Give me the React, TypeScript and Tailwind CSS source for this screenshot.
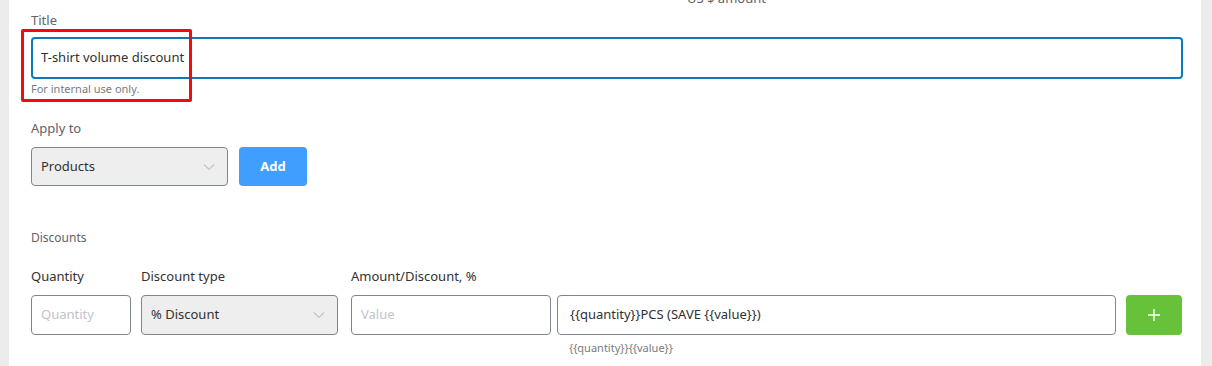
import React from 'react';

const Chevron = () => (
  <svg width="12" height="8" viewBox="0 0 12 8" fill="none" className="shrink-0">
    <path d="M1 1.5 L6 6.5 L11 1.5" stroke="#c0c4cc" strokeWidth="1.2" />
  </svg>
);

const App = () => {
  return (
    <div
      className="flex w-[1212px] h-[366px] bg-[#ececec] overflow-hidden"
      style={{ fontFamily: '"Noto Sans", "Open Sans", sans-serif' }}
    >
      <div className="relative ml-[9px] w-[1192px] bg-white pl-[22px] pr-[18px] flex flex-col">
        {/* cut-off heading from the block above */}
        <div className="-mt-[10px] pl-[656px] text-[13px] leading-[16px] text-[#606266]">US $ amount</div>

        {/* Title */}
        <div className="mt-[6px] text-[13px] leading-[16px] text-[#606266]">Title</div>
        <div className="mt-[9px] h-[42px] border-2 border-[#0a7bb8] rounded-[4px] flex items-center pl-[8px] text-[13px] text-[#303133]">
          T-shirt volume discount
        </div>
        <div className="mt-[3px] text-[11px] leading-[14px] text-[#777b80]">For internal use only.</div>

        {/* highlight box */}
        <div className="absolute left-[12px] top-[29px] w-[171px] h-[73px] border-[3px] border-[#f5080f] rounded-[2px] pointer-events-none" />

        {/* Apply to */}
        <div className="mt-[24px] text-[13px] leading-[16px] text-[#606266]">Apply to</div>
        <div className="mt-[11px] flex gap-[11px]">
          <div className="w-[197px] h-[39px] bg-[#eeeeee] border border-[#7f858d] rounded-[4px] flex items-center justify-between pl-[9px] pr-[12px] text-[13px] text-[#303133]">
            <span>Products</span>
            <Chevron />
          </div>
          <button className="w-[68px] h-[39px] bg-[#409eff] rounded-[4px] text-white text-[13px] font-bold">Add</button>
        </div>

        {/* Discounts */}
        <div className="mt-[44px] text-[12px] leading-[16px] text-[#606266]">Discounts</div>
        <div className="mt-[22px] flex items-start">
          <div className="flex flex-col w-[100px]">
            <div className="text-[13px] leading-[16px] text-[#303133]">Quantity</div>
            <div className="mt-[11px] h-[40px] border border-[#7f858d] rounded-[4px] flex items-center pl-[9px] text-[13px] text-[#c0c4cc]">Quantity</div>
          </div>
          <div className="flex flex-col w-[197px] ml-[10px]">
            <div className="text-[13px] leading-[16px] text-[#303133]">Discount type</div>
            <div className="mt-[11px] h-[40px] bg-[#eeeeee] border border-[#7f858d] rounded-[4px] flex items-center justify-between pl-[9px] pr-[12px] text-[13px] text-[#303133]">
              <span>% Discount</span>
              <Chevron />
            </div>
          </div>
          <div className="flex flex-col w-[200px] ml-[13px]">
            <div className="text-[13px] leading-[16px] text-[#303133]">Amount/Discount, %</div>
            <div className="mt-[11px] h-[40px] border border-[#7f858d] rounded-[4px] flex items-center pl-[9px] text-[13px] text-[#c0c4cc]">Value</div>
          </div>
          <div className="flex flex-col w-[559px] ml-[6px]">
            <div className="h-[16px]" />
            <div className="mt-[11px] h-[40px] border border-[#7f858d] rounded-[4px] flex items-center pl-[12px] text-[13px] text-[#303133]">
              {'{{quantity}}PCS (SAVE {{value}})'}
            </div>
            <div className="mt-[6px] pl-[12px] text-[11px] leading-[14px] text-[#777b80]">{'{{quantity}}{{value}}'}</div>
          </div>
          <div className="flex flex-col ml-[10px]">
            <div className="h-[16px]" />
            <button className="mt-[11px] w-[56px] h-[40px] bg-[#67c23a] rounded-[4px] flex items-center justify-center">
              <svg width="12" height="12" viewBox="0 0 12 12">
                <path d="M6 0 V12 M0 6 H12" stroke="#fff" strokeWidth="1.4" />
              </svg>
            </button>
          </div>
        </div>
      </div>
    </div>
  );
};

export default App;
